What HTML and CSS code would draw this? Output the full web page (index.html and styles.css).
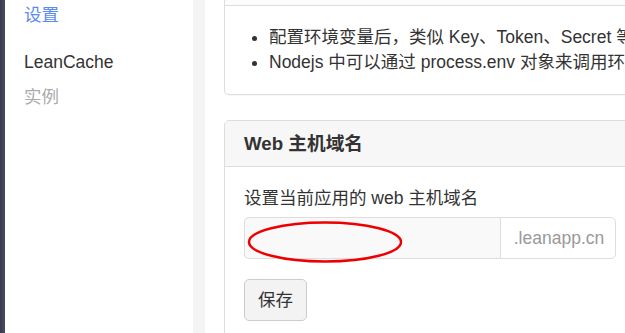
FILE: index.html
```html
<!DOCTYPE html>
<html lang="zh">
<head>
<meta charset="utf-8">
<title>LeanCloud 设置</title>
<link rel="stylesheet" href="styles.css">
</head>
<body>
<div class="rail"></div>
<nav class="sidebar">
  <a class="nav-item active">设置</a>
  <a class="nav-item section">LeanCache</a>
  <a class="nav-item muted">实例</a>
</nav>
<div class="gutter"></div>
<main class="main">
  <section class="panel panel-first">
    <div class="panel-heading cut"></div>
    <div class="panel-body">
      <ul class="notes">
        <li>配置环境变量后，类似 Key、Token、Secret 等敏感信息不必写在代码中</li>
        <li>Nodejs 中可以通过 process.env 对象来调用环境变量</li>
      </ul>
    </div>
  </section>
  <section class="panel">
    <div class="panel-heading"><h3 class="panel-title">Web 主机域名</h3></div>
    <div class="panel-body">
      <label class="field-label">设置当前应用的 web 主机域名</label>
      <div class="input-group">
        <div class="input-wrap">
          <input class="form-control" type="text" value="">
          <svg class="mark" width="160" height="46" viewBox="0 0 160 46"><ellipse cx="78" cy="22" rx="76" ry="19.5" fill="none" stroke="#ee0000" stroke-width="2.5"/></svg>
        </div>
        <span class="addon">.leanapp.cn</span>
      </div>
      <button class="btn">保存</button>
    </div>
  </section>
</main>
</body>
</html>
```
FILE: styles.css
```css
html, body {
  margin: 0;
  padding: 0;
  height: 333px;
  overflow: hidden;
}
body {
  display: flex;
  font-family: "Liberation Sans", Arial, "Noto Sans CJK SC", sans-serif;
  font-size: 17.5px;
  color: #333;
  background: #fff;
}
.rail {
  width: 5px;
  flex: none;
  background: linear-gradient(to right, #383a50, #474a63);
}
.sidebar {
  width: 169px;
  flex: none;
  background: #fff;
  padding: 3px 0 0 19px;
  display: flex;
  flex-direction: column;
}
.nav-item {
  display: block;
  line-height: 25px;
  color: #333;
  text-decoration: none;
}
.nav-item.active { color: #5a8af5; }
.nav-item.section { margin-top: 22px; }
.nav-item.muted { color: #aaa; margin-top: 10px; }
.gutter {
  width: 12px;
  flex: none;
  background: #f4f4f4;
}
.main {
  flex: none;
  width: 440px;
  padding-left: 19px;
  background: #fff;
}
.panel {
  border: 1px solid #ddd;
  border-radius: 5px;
  background: #fff;
  margin-bottom: 25px;
  box-shadow: 0 1px 1px rgba(0,0,0,0.03);
}
.panel-first {
  border-top: none;
  border-top-left-radius: 0;
  border-top-right-radius: 0;
}
.panel-heading {
  background: #f7f7f7;
  border-bottom: 1px solid #ddd;
  padding: 0 19px;
  height: 45px;
  display: flex;
  align-items: center;
  border-radius: 4px 4px 0 0;
}
.panel-heading.cut {
  height: 5px;
  background: #fcfcfc;
  border-radius: 0;
}
.panel-title {
  margin: 0;
  font-size: 18.7px;
  font-weight: bold;
  color: #333;
  line-height: 24px;
}
.panel-body {
  padding: 19px 19px 20px 19px;
}
.notes {
  margin: 0;
  padding-left: 25px;
  line-height: 24.5px;
  white-space: nowrap;
}
.field-label {
  display: block;
  line-height: 25px;
  margin-bottom: 6px;
}
.input-group {
  display: flex;
  width: 372px;
  height: 42px;
  margin-bottom: 20px;
}
.input-wrap {
  position: relative;
  width: 256px;
  flex: none;
}
.form-control {
  box-sizing: border-box;
  width: 100%;
  height: 42px;
  margin: 0;
  border: 1px solid #ddd;
  border-right: none;
  border-radius: 5px 0 0 5px;
  background: #f9f9f9;
  font: inherit;
  padding: 0 15px;
  outline: none;
}
.mark {
  position: absolute;
  left: 3px;
  top: 3px;
  overflow: visible;
}
.addon {
  flex: 1;
  box-sizing: border-box;
  border: 1px solid #ddd;
  border-radius: 0 5px 5px 0;
  background: #fff;
  color: #999;
  display: flex;
  align-items: center;
  justify-content: center;
  padding-left: 2px;
}
.btn {
  font: inherit;
  color: #333;
  background: #f3f3f3;
  border: 1px solid #ccc;
  border-radius: 5px;
  height: 42px;
  padding: 0 13px;
  line-height: 40px;
  cursor: pointer;
}
```
